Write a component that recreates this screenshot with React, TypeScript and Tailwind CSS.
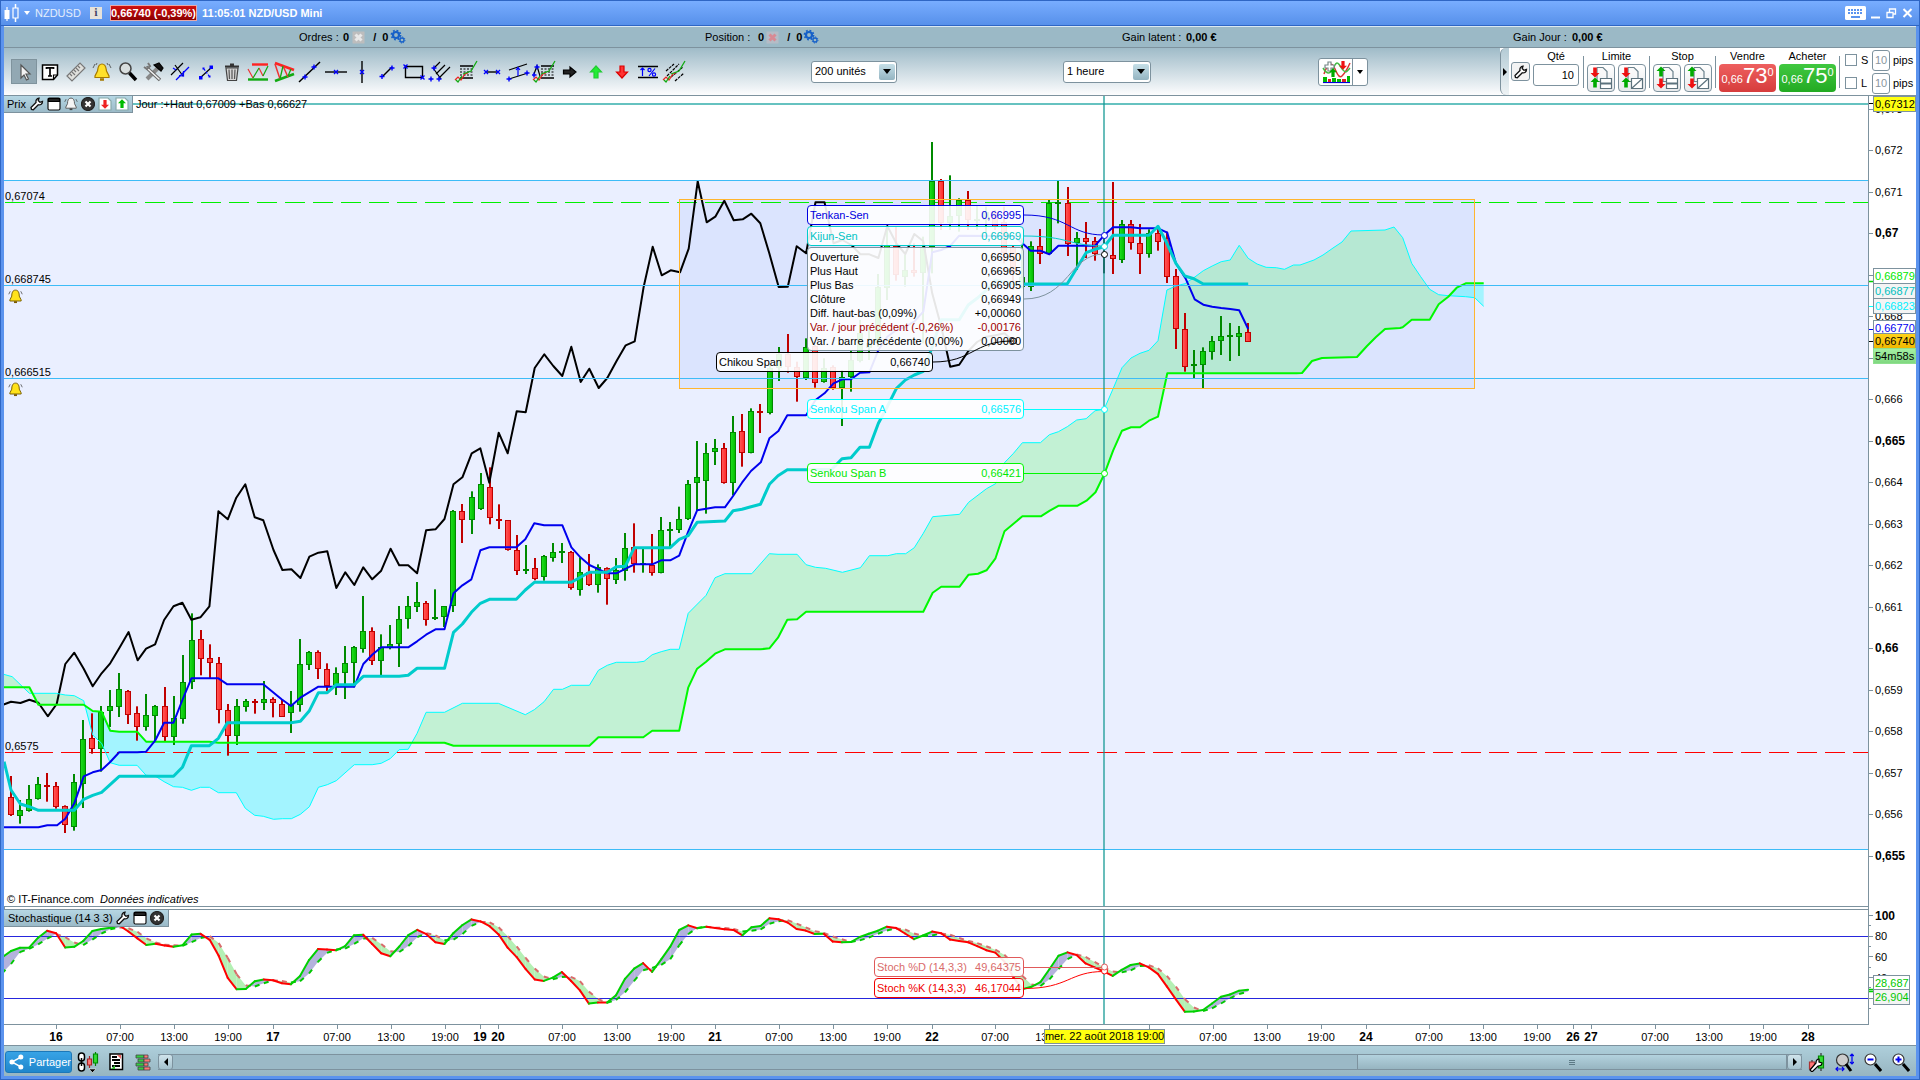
import React from "react";

type Pt = [number, number];

/* ---------- geometry ---------- */
const STEP = 9.03;
const FIRST = 11;
const barX = (i: number) => FIRST + i * STEP;

const trace = (ox: number, oy: number, flat: number[], kx = 2.45): Pt[] => {
  const out: Pt[] = [];
  for (let i = 0; i < flat.length; i += 2) out.push([ox + flat[i] / kx, oy + flat[i + 1] / 3]);
  return out;
};
const pts = (p: Pt[]) => p.map(([x, y]) => `${x.toFixed(1)},${y.toFixed(1)}`).join(" ");

/* ---------- candles: high, body top, body bottom, low, up(1)/down(0) ---------- */
const EARLY: number[][] = [
  [978, 1042, 1094, 1098, 0], [1050, 1080, 1097, 1121, 1], [1005, 1048, 1082, 1085, 1], [981, 1003, 1046, 1049, 1],
  [969, 1005, 1010, 1055, 0], [996, 1009, 1070, 1076, 0], [1066, 1069, 1126, 1149, 0], [972, 997, 1130, 1142, 1],
  [810, 868, 1001, 1074, 1], [790, 865, 896, 911, 0], [768, 785, 896, 965, 1], [720, 768, 782, 831, 1],
  [669, 718, 770, 801, 1], [720, 723, 794, 822, 0], [769, 790, 830, 872, 0], [732, 796, 830, 842, 1],
  [765, 768, 797, 870, 1], [711, 768, 860, 873, 0], [738, 805, 860, 885, 1], [615, 697, 806, 821, 1],
  [490, 571, 697, 717, 1], [540, 568, 626, 676, 0], [583, 625, 640, 685, 0], [621, 640, 781, 820, 0],
  [762, 781, 857, 917, 0], [747, 768, 857, 885, 1], [747, 753, 772, 785, 1], [747, 753, 760, 791, 0],
  [693, 747, 760, 780, 1], [742, 747, 760, 802, 0], [748, 762, 800, 800, 0], [723, 765, 790, 849, 1],
  [567, 643, 764, 785, 1], [603, 607, 646, 660, 1], [601, 607, 656, 687, 0], [640, 657, 708, 723, 0],
  [652, 670, 706, 735, 1], [588, 640, 668, 747, 1], [588, 592, 640, 712, 1], [438, 544, 596, 608, 1],
  [532, 544, 632, 645, 0], [553, 592, 632, 676, 1], [525, 583, 595, 598, 1], [468, 508, 583, 651, 1],
  [438, 469, 506, 536, 1], [396, 457, 470, 486, 1], [453, 460, 509, 527, 0], [418, 502, 507, 510, 1],
  [468, 469, 500, 531, 1], [180, 184, 469, 486, 1], [162, 184, 209, 279, 0], [124, 142, 209, 252, 1],
  [69, 103, 178, 180, 1], [52, 112, 203, 223, 0], [163, 208, 213, 237, 0], [211, 211, 301, 302, 0],
  [255, 301, 362, 375, 0], [285, 358, 362, 372, 1], [324, 355, 386, 391, 0], [315, 319, 382, 392, 1],
  [279, 307, 323, 335, 1], [279, 304, 310, 339, 1], [303, 307, 415, 419, 0], [322, 367, 419, 437, 1],
  [312, 367, 406, 408, 0], [343, 352, 404, 428, 1], [352, 355, 388, 464, 0], [324, 360, 389, 402, 1],
  [249, 295, 362, 392, 1], [220, 292, 343, 368, 0], [295, 340, 344, 368, 1], [252, 345, 370, 377, 0],
  [201, 241, 370, 370, 1], [216, 237, 242, 292, 1], [170, 208, 239, 249, 1], [90, 103, 206, 210, 1],
];
const LATE: number[][] = [
  [933, 1042, 1060, 1140, 1], [939, 969, 1054, 1151, 1], [927, 955, 967, 1005, 1], [939, 955, 1060, 1061, 0],
  [858, 907, 1060, 1096, 1], [852, 904, 970, 1010, 0], [835, 844, 968, 970, 1], [822, 844, 848, 909, 0],
  [700, 715, 848, 853, 1], [651, 672, 715, 753, 1], [612, 672, 710, 728, 0], [695, 710, 740, 815, 0],
  [625, 650, 743, 750, 1], [645, 648, 758, 773, 0], [685, 714, 755, 758, 1], [706, 712, 775, 779, 0],
  [720, 742, 773, 888, 1], [660, 690, 742, 785, 1], [570, 610, 692, 697, 1], [590, 640, 655, 690, 1],
  [432, 472, 640, 650, 1], [290, 345, 474, 510, 1], [290, 348, 436, 452, 0], [375, 420, 440, 470, 1],
  [340, 420, 430, 440, 0], [320, 350, 428, 640, 1], [36, 154, 350, 430, 1], [147, 153, 278, 300, 0],
  [136, 258, 278, 300, 1], [205, 210, 258, 305, 1], [183, 210, 270, 300, 0], [225, 268, 274, 300, 1],
  [230, 245, 270, 310, 1], [240, 245, 290, 300, 0], [230, 275, 370, 400, 0], [345, 350, 430, 480, 0],
  [325, 440, 472, 475, 1], [334, 348, 472, 483, 1], [297, 348, 371, 402, 0], [210, 219, 372, 375, 1],
  [152, 216, 221, 280, 1], [171, 219, 341, 378, 0], [306, 324, 340, 420, 1], [276, 324, 335, 384, 0],
  [321, 334, 373, 392, 0], [320, 372, 376, 430, 2], [156, 376, 387, 432, 0], [270, 283, 389, 399, 1],
  [270, 283, 338, 359, 0], [282, 339, 373, 432, 0], [298, 310, 373, 383, 1], [298, 310, 335, 362, 0],
  [305, 325, 440, 459, 0], [417, 439, 596, 657, 0], [549, 598, 710, 725, 0], [660, 702, 706, 744, 1],
  [652, 664, 704, 775, 1], [618, 634, 665, 689, 1], [558, 619, 634, 675, 1], [579, 616, 620, 693, 1],
  [588, 610, 620, 678, 1], [579, 607, 635, 636, 0],
];
const CANDLES = [
  ...EARLY.map((c) => [450 + c[0] / 3, 450 + c[1] / 3, 450 + c[2] / 3, 450 + c[3] / 3, c[4]]),
  ...LATE.map((c) => [130 + c[0] / 3, 130 + c[1] / 3, 130 + c[2] / 3, 130 + c[3] / 3, c[4]]),
];

/* ---------- Ichimoku lines ---------- */
const CHIKOU: Pt[] = [
  ...trace(0, 450, [0, 768, 27, 755, 50, 759, 72, 749, 94, 758, 117, 799, 139, 762, 160, 642, 182, 608, 205, 656, 227, 709, 249, 670, 270, 640, 292, 595, 315, 546, 337, 631, 358, 596, 380, 583, 402, 510, 425, 469, 447, 458, 469, 509, 491, 502, 513, 469, 535, 184, 558, 208, 579, 143, 601, 103, 624, 202, 645, 211, 670, 300, 692, 360, 714, 358, 736, 384, 758, 320, 780, 308, 802, 304, 824, 414, 846, 367, 868, 405, 890, 352, 912, 388, 934, 362, 957, 296, 978, 346, 1000, 346, 1022, 370, 1044, 241, 1067, 238, 1089, 207, 1111, 103, 1133, 82]),
  ...trace(390, 50, [245, 1210, 271, 1195, 298, 1298, 326, 1148, 353, 1210, 380, 1084, 407, 1087, 434, 954, 463, 913, 490, 948, 517, 978, 544, 890, 572, 996, 598, 956, 626, 1014, 652, 984, 680, 932, 707, 886, 734, 874, 761, 710, 788, 590, 815, 676, 842, 661, 870, 667, 896, 596, 923, 394, 950, 517, 976, 500, 1003, 452, 1031, 511, 1058, 508, 1084, 491, 1111, 520, 1138, 610, 1166, 711], 3),
  ...trace(660, 130, [313, 470, 335, 349, 358, 370, 381, 217, 403, 217, 425, 340, 447, 330, 469, 345, 491, 373, 513, 373, 535, 384, 557, 288, 579, 340, 601, 372, 623, 312, 645, 334, 667, 490, 689, 590, 711, 710, 733, 704, 755, 664, 777, 636, 800, 620, 822, 616, 844, 610, 866, 634]),
];
const TENKAN: Pt[] = [
  ...trace(0, 450, [0, 1132, 94, 1132, 116, 1126, 140, 1126, 160, 1106, 182, 1060, 205, 979, 227, 967, 249, 960, 270, 936, 292, 907, 336, 907, 358, 905, 380, 872, 402, 818, 425, 818, 447, 750, 469, 685, 535, 685, 557, 703, 645, 703, 690, 748, 713, 768, 736, 743, 780, 710, 868, 710, 890, 642, 912, 614, 934, 592, 1000, 592, 1022, 574, 1044, 554, 1067, 538, 1089, 538, 1111, 430, 1133, 406, 1155, 388, 1177, 301, 1199, 292, 1265, 292, 1287, 268, 1309, 220, 1333, 226, 1378, 226, 1400, 292, 1422, 322, 1444, 345, 1488, 370, 1510, 370, 1554, 343]),
  ...trace(640, 450, [0, 343, 30, 343, 52, 331, 74, 331, 96, 317, 118, 245, 140, 181, 162, 176, 184, 172, 208, 172, 228, 138, 250, 98, 272, 63]),
  ...trace(660, 130, [247, 997, 268, 925, 290, 903, 312, 856, 358, 856, 381, 810, 403, 790, 425, 760, 447, 748, 468, 748, 490, 728, 513, 727, 535, 660, 557, 620, 579, 600, 601, 590, 623, 575, 645, 545, 667, 367, 689, 360, 711, 348, 733, 317, 844, 318, 866, 318, 888, 340, 908, 362, 932, 362, 954, 373, 976, 347, 1066, 347, 1088, 316, 1110, 292, 1154, 292, 1176, 295, 1220, 295, 1243, 308, 1264, 400, 1288, 446, 1310, 508, 1331, 524, 1353, 530, 1375, 534, 1397, 537, 1419, 541, 1441, 597]),
];
const KIJUN: Pt[] = [
  ...trace(0, 450, [10, 935, 27, 1020, 50, 1062, 72, 1070, 94, 1081, 182, 1081, 205, 1048, 227, 1036, 249, 1027, 292, 979, 425, 979, 447, 952, 469, 887, 513, 887, 535, 865, 557, 818, 713, 818, 736, 814, 758, 782, 780, 728, 802, 728, 824, 704, 868, 704, 890, 679, 978, 679, 1000, 676, 1022, 655, 1089, 655, 1111, 547, 1133, 522, 1155, 487, 1177, 460, 1199, 448, 1265, 448, 1287, 420, 1309, 397, 1400, 397, 1444, 367, 1488, 367, 1510, 350, 1532, 349, 1554, 293]),
  ...trace(640, 450, [0, 293, 74, 293, 96, 268, 118, 257, 140, 217, 208, 213, 228, 182, 250, 178, 272, 170, 295, 163, 317, 103, 338, 77, 361, 59, 410, 59, 470, 58, 495, 26]),
  ...trace(660, 130, [468, 983, 490, 952, 513, 952, 535, 880, 557, 830, 579, 776, 601, 750, 623, 735, 645, 724, 667, 650, 689, 569, 733, 569, 755, 525, 777, 505, 800, 480, 822, 450, 866, 462, 998, 461, 1021, 415, 1044, 368, 1066, 358, 1088, 350, 1110, 316, 1198, 316, 1220, 289, 1242, 340, 1264, 400, 1286, 438, 1308, 446, 1331, 462, 1441, 462]),
];
const SPAN_A: Pt[] = [
  ...trace(0, 450, [0, 670, 30, 680, 72, 730, 138, 730, 160, 735, 182, 737, 205, 752, 227, 855, 249, 880, 270, 938, 292, 946, 336, 946, 358, 976, 380, 978, 402, 995, 425, 1010, 447, 1012, 469, 1021, 491, 1012, 513, 1012, 535, 1028, 579, 1028, 601, 1075, 624, 1096, 645, 1099, 670, 1108, 692, 1106, 714, 1106, 736, 1093, 758, 1070, 780, 1012, 802, 1004, 824, 992, 868, 944, 912, 944, 934, 940, 956, 926, 978, 899, 1000, 898, 1022, 850, 1044, 787, 1089, 787, 1133, 760, 1221, 760, 1287, 794, 1309, 779, 1333, 755, 1356, 718, 1378, 718, 1400, 706, 1444, 706, 1466, 661, 1488, 646, 1510, 637, 1560, 637]),
  ...trace(640, 450, [10, 634, 30, 614, 52, 605, 74, 598, 96, 598, 118, 490, 162, 436, 184, 383, 208, 371, 274, 371, 317, 311, 338, 313, 385, 313, 407, 344, 430, 352, 455, 355, 496, 367, 540, 353, 562, 317, 607, 317, 628, 311, 651, 311, 672, 293, 694, 250, 717, 200, 783, 193, 805, 157, 849, 116, 871, 101]),
  ...trace(660, 130, [844, 998, 866, 970, 888, 938, 932, 938, 954, 914, 976, 905, 998, 890, 1021, 870, 1044, 866, 1066, 842, 1088, 838, 1110, 776, 1132, 713, 1154, 684, 1176, 670, 1198, 661, 1220, 632, 1242, 480, 1264, 468, 1286, 461, 1308, 443, 1331, 422, 1353, 408, 1375, 395, 1397, 390, 1419, 346, 1441, 385, 1463, 402, 1485, 412, 1510, 413, 1530, 418, 1552, 405]),
  [1300, 265], [1314, 260], [1323, 255], [1333, 248], [1342, 242], [1351, 231], [1385, 230], [1394, 227],
  ...trace(1400, 90, [8, 443, 35, 520, 62, 560, 89, 598, 116, 614, 145, 617, 197, 620, 224, 623, 251, 649], 3),
];
const SPAN_B: Pt[] = [
  ...trace(0, 450, [0, 712, 72, 712, 94, 764, 205, 764, 227, 783, 249, 785, 270, 842, 292, 845, 336, 845, 358, 875, 513, 875, 535, 878, 1089, 878, 1111, 887, 1444, 887, 1466, 862, 1568, 862]),
  ...trace(640, 450, [8, 862, 30, 842, 96, 842, 118, 713, 140, 656, 162, 635, 184, 611, 208, 598, 295, 598, 317, 595, 338, 563, 361, 509, 385, 508, 407, 485, 694, 485, 717, 428, 738, 410, 783, 410, 805, 374, 828, 371, 849, 361, 871, 325, 893, 244, 937, 199, 982, 199, 1004, 182, 1026, 167, 1072, 167, 1094, 152, 1116, 127, 1138, 71]),
  ...trace(660, 130, [1110, 962, 1132, 902, 1154, 892, 1176, 892, 1198, 872, 1220, 860, 1243, 730, 1560, 730]),
  [1302, 373], [1312, 361], [1322, 358], [1357, 357], [1367, 346], [1376, 337], [1385, 329], [1400, 328],
  ...trace(1400, 90, [8, 712, 35, 689, 89, 689, 116, 643, 145, 620, 170, 593, 197, 580, 251, 580], 3),
];
const CLOUD = pts([...SPAN_A, ...[...SPAN_B].reverse()]);

/* ---------- stochastic ---------- */
const K_RAW: Pt[] = [
  ...trace(0, 890, [-10, 215, 12, 196, 27, 183, 50, 173, 72, 173, 94, 142, 116, 122, 138, 130, 161, 175, 183, 170, 205, 152, 227, 122, 249, 117, 271, 113, 292, 106, 315, 125, 358, 165, 380, 161, 402, 166, 425, 170, 447, 166, 469, 134, 491, 131, 513, 148, 535, 195, 557, 262, 579, 298, 601, 298, 623, 274, 645, 268, 669, 271, 692, 280, 713, 283, 736, 257, 758, 208, 780, 176, 824, 181, 846, 168, 868, 135, 890, 134, 934, 190, 956, 199, 978, 170, 1000, 136, 1022, 119, 1044, 132, 1067, 157, 1089, 162, 1111, 129, 1133, 105, 1155, 88, 1177, 94, 1199, 108, 1221, 132, 1243, 172, 1265, 200, 1287, 236, 1309, 268, 1333, 273, 1356, 262, 1378, 245, 1420, 300, 1444, 343, 1466, 337, 1490, 338, 1510, 315, 1532, 265, 1554, 235]),
  ...trace(640, 890, [8, 219, 30, 246, 52, 208, 74, 170, 96, 120, 118, 106, 140, 115, 162, 110, 208, 118, 228, 119, 250, 137, 272, 112, 295, 108, 317, 85, 340, 88, 361, 97, 385, 118, 407, 122, 430, 133, 452, 131, 474, 157, 515, 157, 540, 140, 583, 122, 607, 109, 628, 114, 672, 148, 717, 124, 738, 130, 760, 149, 805, 157, 849, 181, 871, 188, 893, 215, 915, 262, 937, 298, 960, 290, 980, 278, 1004, 236, 1026, 196, 1048, 187, 1072, 196, 1094, 223, 1116, 233, 1138, 245, 1160, 259, 1182, 238, 1204, 224, 1226, 220, 1248, 233, 1270, 253, 1314, 330, 1336, 367, 1360, 364, 1380, 360, 1402, 340, 1425, 319, 1447, 313, 1468, 302, 1492, 299]),
];
const sample = (x: number) => {
  for (let i = 1; i < K_RAW.length; i++) {
    const [x0, y0] = K_RAW[i - 1];
    const [x1, y1] = K_RAW[i];
    if (x <= x1) return y0 + ((y1 - y0) * (x - x0)) / (x1 - x0 || 1);
  }
  return K_RAW[K_RAW.length - 1][1];
};
const K: Pt[] = Array.from({ length: 139 }, (_, n): Pt => [barX(n - 1), sample(barX(n - 1))]);
const D: Pt[] = K.map(([x, y], i): Pt => {
  if (i < 2) return [x, y + 16 - i * 3];
  return [x, (K[i][1] + K[i - 1][1] + K[i - 2][1]) / 3];
});

/* ---------- axes ---------- */
const TIMES: [number, string][] = [
  [56, "16"], [120, "07:00"], [174, "13:00"], [228, "19:00"], [273, "17"], [337, "07:00"], [391, "13:00"], [445, "19:00"],
  [480, "19"], [498, "20"], [562, "07:00"], [617, "13:00"], [671, "19:00"], [715, "21"], [779, "07:00"], [833, "13:00"],
  [887, "19:00"], [932, "22"], [995, "07:00"], [1049, "13:00"], [1149, ""], [1213, "07:00"], [1267, "13:00"],
  [1321, "19:00"], [1366, "24"], [1429, "07:00"], [1483, "13:00"], [1537, "19:00"], [1573, "26"], [1591, "27"],
  [1655, "07:00"], [1709, "13:00"], [1763, "19:00"], [1808, "28"],
];
const PRICES = ["0,673", "0,672", "0,671", "0,67", "0,669", "0,668", "0,667", "0,666", "0,665", "0,664", "0,663", "0,662", "0,661", "0,66", "0,659", "0,658", "0,657", "0,656", "0,655"];
const MAJOR = ["0,67", "0,665", "0,66", "0,655"];

/* ---------- icons ---------- */
const Svg = ({ w = 24, h = 24, children }: { w?: number; h?: number; children: React.ReactNode }) => (
  <svg width={w} height={h} viewBox={`0 0 ${w} ${h}`} fill="none" stroke="#000" strokeWidth="1.2" aria-hidden="true" className="shrink-0">
    {children}
  </svg>
);
const X = ({ x, y }: { x: number; y: number }) => <path d={`M${x - 2} ${y - 2}l4 4m0-4l-4 4`} stroke="#00f" strokeWidth="1.3" />;
const P = ({ x, y }: { x: number; y: number }) => <path d={`M${x - 2.5} ${y}h5M${x} ${y - 2.5}v5`} stroke="#00f" strokeWidth="1.4" />;
const Wrench = () => (
  <Svg w={14} h={14}>
    <path d="M1.5 12.5l-.5-2 5-5c-.5-2 .8-4 3-4.300l-.8 2.300 1.800 1.800L12.500 4.500c0 2.500-2 3.800-4.200 3.300l-5 5z" fill="#fff" stroke="#111" strokeWidth="1.3" />
  </Svg>
);
const WindowIco = () => (
  <Svg w={14} h={14}><rect x="1" y="1" width="12" height="12" rx="1.500" fill="#fff" stroke="#111" /><path d="M1.500 1.500h11v3h-11z" fill="#222" /></Svg>
);
const CloseIco = () => (
  <Svg w={14} h={14}><circle cx="7" cy="7" r="6.500" fill="#333" stroke="#222" /><path d="M4.500 4.500l5 5m0-5l-5 5" stroke="#fff" strokeWidth="2.200" /></Svg>
);
const Bell = ({ gold = false, s = 14 }: { gold?: boolean; s?: number }) => (
  <svg width={s} height={s} viewBox="0 0 20 20" aria-hidden="true" className="shrink-0">
    <path d="M10 1.500c-4 0-5 4-5 8l-2.500 5v1.500h15v-1.500l-2.500-5c0-4-1-8-5-8z" fill={gold ? "#ffe21a" : "#f4f4f4"} stroke={gold ? "#7a6000" : "#555"} strokeWidth="1.300" />
    <path d="M8 17.500h4" stroke={gold ? "#7a5a00" : "#444"} strokeWidth="2.500" />
    <path d="M3 3L1 7M17 3l2 4" stroke="#444" strokeWidth="1" />
  </svg>
);
const Arrow = ({ x, y, up, c, s = 1 }: { x: number; y: number; up?: boolean; c: string; s?: number }) => (
  <path d={up ? "M0-6l5 5h-3v6h-4v-6h-3z" : "M0 6l5-5h-3v-6h-4v6h-3z"} transform={`translate(${x} ${y}) scale(${s})`} fill={c} stroke="none" />
);
const PageArrow = ({ up }: { up?: boolean }) => (
  <Svg w={14} h={14}><path d="M1 1h9l3 3v9h-12z" fill="#fff" stroke="#8aa" /><Arrow x={7} y={7} up={up} c={up ? "#0b0" : "#e22"} s={0.8} /></Svg>
);
const Gears = () => (
  <Svg w={17} h={16}>
    <circle cx="6" cy="6" r="3" stroke="#1660c8" strokeWidth="2.200" />
    <circle cx="6" cy="6" r="4.600" stroke="#1660c8" strokeWidth="1.600" strokeDasharray="1.800 1.800" />
    <circle cx="12" cy="11" r="2" stroke="#1660c8" strokeWidth="1.300" />
    <circle cx="12" cy="11" r="3" stroke="#1660c8" strokeWidth="1" strokeDasharray="1.300 1" />
  </Svg>
);
const CancelPage = ({ c, bg }: { c: string; bg: string }) => (
  <Svg w={13} h={13}><rect x=".5" y=".5" width="12" height="12" fill={bg} stroke="none" /><path d="M3.500 3.500l6 6m0-6l-6 6" stroke={c} strokeWidth="3" /></Svg>
);
const wave = (
  <>
    <path d="M1 20l3-3 3 3 4-6 3-1" stroke="#e22" />
    <path d="M2 20l2 2 4-6M9 14l8-3 6-10" stroke="#1a1" strokeWidth="1.300" />
  </>
);

const TOOLS: [string, React.ReactNode][] = [
  ["Curseur", <path d="M9 5v13l3-3 2.500 5 2-1-2.500-5h4z" fill="#f2f2f2" stroke="#555" />],
  ["Texte", <><path d="M4.500 5h15v10l-4 4.500h-11z" fill="#fff" strokeWidth="1.500" /><path d="M19.500 15h-4v4.500" /><path d="M8.500 9V7.800h7V9M12 8v8M10 16h4" strokeWidth="1.700" /></>],
  ["Règle", <><path d="M3 16L16 3l5 5L8 21z" fill="#e0e0dc" stroke="#777" /><path d="M6 14l2 2m0-4l3 3m-1-5l2 2m0-4l3 3m-1-5l2 2" stroke="#777" /></>],
  ["Alerte", <><path d="M12 4c-4 0-4 4-4.500 7L5 16v1.500h14V16l-2.500-5C16 8 16 4 12 4z" fill="#ffe02a" stroke="#a67a00" /><path d="M10 19.500h4" stroke="#a67a00" strokeWidth="2.500" /><path d="M5 4L3 8M19 4l2 4M7 3l-1 2M17 3l1 2" stroke="#444" strokeWidth=".8" /></>],
  ["Loupe", <><circle cx="9.500" cy="8.500" r="5.500" fill="#d8dede" stroke="#444" strokeWidth="1.500" /><path d="M13.500 13l6.500 7" strokeWidth="3.500" /></>],
  ["Outils", <><path d="M5 19L16 8" stroke="#888" strokeWidth="4" /><path d="M4 7l14 13" stroke="#666" strokeWidth="3.500" /><path d="M4.500 7.500l13 12" stroke="#f2f2f2" strokeWidth="1.500" /><path d="M12 5l5-2 4 5-2 3z" fill="#111" /><path d="M2 7l3 2 3-3-2-3" stroke="#777" strokeWidth="2" /></>],
  ["Parallèles", <><path d="M3 15L15 3M7 5l8 11" /><path d="M8 20L21 7" stroke="#00f" strokeWidth="1.300" /><path d="M11 15.500l4.500.5V11" stroke="#00f" /><path d="M5 8l3 2" stroke="#00f" /></>],
  ["Segment croisé", <><path d="M6 18L18 7" /><path d="M5 16h3.500v3.500H5zM15.500 5.500H19V9h-3.500z" fill="#00f" stroke="none" /><path d="M10 9l5 7" stroke="#00f" strokeDasharray="2 1.500" /><path d="M8.500 7.500h2v2h-2zM14.500 15.500h2v2h-2z" fill="#00f" stroke="none" /></>],
  ["Corbeille", <><path d="M6 8h12l-1.500 12.500h-9z" fill="#d5d5d5" stroke="#444" /><path d="M5 6.500h14M10 4.500h4" stroke="#333" strokeWidth="2" /><path d="M9 9.500l.5 9.500M12 9.500V19M15 9.500l-.5 9.500" stroke="#555" /></>],
  ["Canal horizontal", <><path d="M6 4.500h16" stroke="#f22" strokeWidth="2.400" /><path d="M2 19.500h20" stroke="#1a1" strokeWidth="2.400" /><path d="M2 9l5 9M13 8l4 8" stroke="#e33" /><path d="M7 18l6-10M17 16l5-10" stroke="#1a1" /></>],
  ["Triangle", <><path d="M3 3l19 7" stroke="#f22" strokeWidth="2.600" /><path d="M3 21l19-7" stroke="#1a1" strokeWidth="2.600" /><path d="M3 4l5 15M11 6l5 11" stroke="#e33" strokeWidth="1.500" /><path d="M8 19l3-13M16 16l3-7" stroke="#1a1" strokeWidth="1.300" /></>],
  ["Droite", <><path d="M1 22L22 2" strokeWidth="1.500" /><P x={7} y={17} /><P x={16} y={7} /></>],
  ["Horizontale", <><path d="M1 12h22" strokeWidth="1.400" /><X x={12} y={12} /></>],
  ["Verticale", <><path d="M12 1v22" strokeWidth="1.400" /><X x={12} y={12} /></>],
  ["Segment", <><path d="M7 16l9-9" strokeWidth="1.500" /><P x={6} y={16.500} /><P x={16} y={8} /></>],
  ["Rectangle", <><path d="M3.500 6.500h17v11h-17z" strokeWidth="1.400" /><X x={3.500} y={6.500} /><X x={20.500} y={17.500} /></>],
  ["Fourche", <><path d="M5 8l8 11M6 8l6-6M8 14l9-9M11 18l11-11" /><P x={6} y={8} /><P x={3} y={19} /><P x={11} y={19} /></>],
  ["Fibonacci", <><path d="M6 6h13M6 18h13" strokeWidth="1.500" /><path d="M6 9h13M6 12h13M6 15h13" strokeDasharray="2 1.500" />{wave}</>],
  ["Mesure", <><path d="M6 12h12" strokeWidth="1.400" /><X x={6} y={12} /><X x={18} y={12} /></>],
  ["Canal", <><path d="M3 10l18-6M3 19l19-6" /><path d="M12 8v8M10 10l2-2.500 2 2.500" stroke="#00f" /><P x={3} y={19} /><P x={21} y={13} /></>],
  ["Extension", <><path d="M9 6h13M9 18h13" strokeWidth="1.500" /><path d="M9 9h13M9 12h13M9 15h13" strokeDasharray="2 1.500" />{wave}<path d="M2 14l3-8 3 10" /><P x={5} y={7} /><P x={2} y={15} /></>],
  ["Flèche droite", <path d="M5.500 10h6.500V7l6 5-6 5v-3H5.500z" fill="#222" />],
  ["Flèche haut", <path d="M12 6l5.500 6H14v6h-4v-6H6.500z" fill="#2e3" stroke="#2c3" />],
  ["Flèche bas", <path d="M12 18l5.500-6H14V6h-4v6H6.500z" fill="#f33" stroke="#d00" />],
  ["Pourcentage", <><path d="M2 6.500h20M2 17.500h20" strokeWidth="1.400" /><path d="M6.500 8v8M4.500 10l2-2 2 2" stroke="#00f" /><path d="M19 8.500l-6 7.500" stroke="#00f" /><circle cx="13.500" cy="10" r="1.600" stroke="#00f" /><circle cx="18" cy="14.500" r="1.600" stroke="#00f" /></>],
  ["Éventail", <><path d="M4 11l8-7M5 16L17 4M9 17L21 7M13 21l9-8" strokeDasharray="3 1" />{wave}</>],
];

const Sep = () => <span className="mx-px h-8 w-px self-center bg-[#7d929e]" />;
const iconBtn = "flex h-7 w-7 items-center justify-center rounded-sm border border-[#7d929e] bg-linear-to-b from-white to-[#e8eaec]";
const OrderIco = ({ limit, slash }: { limit?: boolean; slash?: boolean }) => (
  <Svg w={26} h={26}>
    <path d="M9 2.500h6l4 4v7M9 2.500v14h3" stroke="#6c828d" fill="#f8f8f8" />
    <path d="M12.500 13.500h11v10h-11z" fill="#fff" stroke="#5c727d" />
    {slash ? <path d="M12.500 23.500l11-10" stroke="#5c727d" /> : <path d="M13 18.500h10" stroke="#5c727d" strokeWidth="2" />}
    <Arrow x={7} y={7} up={!limit} c={limit ? "#e11" : "#0a0"} s={0.9} />
    <Arrow x={7} y={18} up={limit} c={limit ? "#0a0" : "#e11"} s={0.9} />
  </Svg>
);

const Price = ({ name, tail, cls, label }: { name: string; tail: string; cls: string; label: string }) => (
  <div className="flex flex-col items-center">
    <span className="h-4 leading-4">{label}</span>
    <button aria-label={name} className={`flex h-7 w-[57px] items-baseline justify-center rounded-sm text-white ${cls}`}>
      <span className="text-[11px] leading-7">0,66</span>
      <span className="text-[22px] leading-6">{tail}</span>
      <span className="self-start text-[11px] leading-4">0</span>
    </button>
  </div>
);

const Tag = ({ y, t, cls }: { y: string; t: string; cls: string }) => (
  <span className={`absolute left-1 flex h-4 items-center border pl-px text-[11px] ${y} ${cls}`}>{t}</span>
);
const Info = ({ pos, name, val, cls }: { pos: string; name: string; val: string; cls: string }) => (
  <div className={`absolute flex h-5 items-center justify-between rounded-[4px] border bg-white/90 px-[2px] ${pos} ${cls}`}>
    <span>{name}</span>
    <span>{val}</span>
  </div>
);

const OHLC: [string, string, string][] = [
  ["Ouverture", "0,66950", ""], ["Plus Haut", "0,66965", ""], ["Plus Bas", "0,66905", ""], ["Clôture", "0,66949", ""],
  ["Diff. haut-bas (0,09%)", "+0,00060", ""], ["Var. / jour précédent (-0,26%)", "-0,00176", "text-[#a00000]"],
  ["Var. / barre précédente (0,00%)", "0,00000", ""],
];
const LEVELS: [string, string, boolean][] = [
  ["top-[94px]", "0,67074", false], ["top-[177px]", "0,668745", true], ["top-[270px]", "0,666515", true], ["top-[644px]", "0,6575", false],
];

const Select = ({ label, value, cls }: { label: string; value: string; cls: string }) => (
  <div className={`relative h-[22px] ${cls}`}>
    <select aria-label={label} className="h-full w-full appearance-none rounded-[3px] border border-[#7d929e] bg-white pl-[3px] text-[11px]">
      <option>{value}</option>
    </select>
    <span className="pointer-events-none absolute top-[3px] right-[2px] flex h-4 w-4 items-center justify-center rounded-[2px] bg-linear-to-b from-[#c5dfe8] to-[#94b4c1]">
      <span className="border-x-4 border-t-[5px] border-x-transparent border-t-black" />
    </span>
  </div>
);

function PriceChart() {
  return (
    <section className="relative min-h-0 flex-1 overflow-hidden border-b border-[#7d929e] bg-white">
      <svg className="absolute inset-0 h-full w-full" aria-label="Cours NZD/USD">
        <defs>
          <clipPath id="bull"><rect x="0" y="0" width="84" height="1000" /><rect x="412" y="0" width="1036" height="1000" /></clipPath>
          <clipPath id="bear"><rect x="84" y="0" width="328" height="1000" /><rect x="1448" y="0" width="60" height="1000" /></clipPath>
          <linearGradient id="up"><stop offset="0" stopColor="#1fe01f" /><stop offset="1" stopColor="#0b0" /></linearGradient>
          <linearGradient id="down"><stop offset="0" stopColor="#ff5a5a" /><stop offset="1" stopColor="#ff2828" /></linearGradient>
        </defs>
        <g transform="translate(-4 -96)">
          <rect x="0" y="180" width="4000" height="669" fill="#eaefff" />
          <rect x="679.5" y="199.5" width="795" height="189" fill="#dbe4fe" />
          <polygon points={CLOUD} fill="#00ff00" fillOpacity=".17" clipPath="url(#bull)" />
          <polygon points={CLOUD} fill="#00ffff" fillOpacity=".3" clipPath="url(#bear)" />
          <path d="M5 202.500H4000" stroke="#00f000" strokeDasharray="20 8" />
          <path d="M5 752.500H4000" stroke="#f00" strokeDasharray="20 8" />
          {CANDLES.map(([h, t, b, l, up], i) => {
            const x = Math.round(barX(i));
            const edge = up === 2 ? "#333" : up ? "#008a00" : "#c00000";
            const top = Math.round(t);
            return (
              <g key={i}>
                <rect x={x - 1} y={h} width="2" height={l - h} fill={edge} />
                <rect x={x - 2.5} y={top + 0.5} width="5" height={Math.max(1, Math.round(b) - top - 1)} fill={up === 1 ? "url(#up)" : up ? "#fff" : "url(#down)"} stroke={edge} />
              </g>
            );
          })}
          <g fill="none" strokeLinejoin="round">
            <polyline points={pts(CHIKOU)} stroke="#000" strokeWidth="2" />
            <polyline points={pts(SPAN_A)} stroke="#00ffff" />
            <polyline points={pts(SPAN_B)} stroke="#00f800" strokeWidth="2" />
            <polyline points={pts(TENKAN)} stroke="#0000ee" strokeWidth="2" />
            <polyline points={pts(KIJUN)} stroke="#00cccc" strokeWidth="3" />
          </g>
          <path d="M0 180.500H4000M0 285.500H4000M0 378.500H4000M0 849.500H4000" stroke="#3dbcf7" />
          <rect x="679.5" y="199.5" width="795" height="189" fill="none" stroke="#ffb52e" />
          <path d="M131 104H4000" stroke="#66c2c0" strokeWidth="2" />
          <path d="M1104 96V1000" stroke="#0c9490" strokeOpacity=".62" strokeWidth="2" />
        </g>
      </svg>

      <div className="absolute top-0 left-0 flex h-[17px] items-center gap-[3px] border-r border-b border-[#7d929e] bg-linear-to-b from-[#b6d7e4] to-[#9bbac8] pr-[3px] pl-[3px]">
        <span className="pr-px">Prix</span>
        <button aria-label="Paramètres"><Wrench /></button>
        <button aria-label="Fenêtre"><WindowIco /></button>
        <button aria-label="Alerte"><Bell /></button>
        <button aria-label="Fermer"><CloseIco /></button>
        <button aria-label="Descendre"><PageArrow /></button>
        <button aria-label="Monter"><PageArrow up /></button>
      </div>
      <span className="absolute top-0 left-[132px] leading-4">Jour :+Haut 0,67009 +Bas 0,66627</span>
      {LEVELS.map(([y, t, bell]) => (
        <div key={t} className={`absolute left-px leading-3 ${y}`}>
          {t}
          {bell && <div className="pt-1 pl-[3px]"><Bell gold s={15} /></div>}
        </div>
      ))}

      <Info pos="top-[109px] left-[803px] w-[217px]" name="Tenkan-Sen" val="0,66995" cls="border-[#0000e0] text-[#0000e0]" />
      <Info pos="top-[130px] left-[803px] w-[217px]" name="Kijun-Sen" val="0,66969" cls="border-[#00cccc] text-[#00c4c4]" />
      <dl className="absolute top-[151px] left-[803px] w-[217px] rounded-[4px] border border-[#7d929e] bg-white/90 px-[2px] py-[2px]">
        {OHLC.map(([n, v, c]) => (
          <div key={n} className={`flex justify-between leading-[14px] ${c}`}><dt>{n}</dt><dd>{v}</dd></div>
        ))}
      </dl>
      <Info pos="top-[256px] left-[712px] w-[217px]" name="Chikou Span" val="0,66740" cls="border-black" />
      <Info pos="top-[303px] left-[803px] w-[217px]" name="Senkou Span A" val="0,66576" cls="border-[#00ffff] text-[#00f0ff]" />
      <Info pos="top-[367px] left-[803px] w-[217px]" name="Senkou Span B" val="0,66421" cls="border-[#00f800] text-[#00e800]" />
      <svg className="pointer-events-none absolute inset-0 h-full w-full" aria-hidden="true">
        <g transform="translate(-4 -96)" fill="none">
          <path d="M1024 215c45 0 45 20 80 20" stroke="#0000e0" />
          <path d="M1024 236c45 0 45 10 80 10" stroke="#00cccc" />
          <path d="M1024 299c45 0 45-45 80-45" stroke="#7d929e" />
          <path d="M933 362c40 0 40-21 80-21" stroke="#000" />
          <path d="M1024 409.500h80" stroke="#00ffff" />
          <path d="M1024 473.500h80" stroke="#00f800" />
          <g fill="#fff">
            <circle cx="1104.500" cy="235.500" r="3" stroke="#0000e0" />
            <circle cx="1104.500" cy="246.500" r="3" stroke="#00cccc" />
            <circle cx="1104.500" cy="254.500" r="3" stroke="#000" />
            <circle cx="1104.500" cy="409.500" r="3" stroke="#00ffff" />
            <circle cx="1104.500" cy="473.500" r="3" stroke="#00f800" />
          </g>
          <circle cx="1013.500" cy="341" r="3" stroke="#000" />
        </g>
      </svg>
      <p className="absolute bottom-0 left-[3px] leading-[14px]">© IT-Finance.com&nbsp; <i>Données indicatives</i></p>
    </section>
  );
}

function StochChart() {
  return (
    <section className="relative h-[116px] shrink-0 overflow-hidden border-y border-[#7d929e] bg-white">
      <svg className="absolute inset-0 h-full w-full" aria-label="Stochastique">
        <g transform="translate(-4 -910)" fill="none">
          {K.slice(1).map(([x, y], n) => {
            const [px, py] = K[n];
            const above = y + py < D[n][1] + D[n + 1][1];
            return <polygon key={n} points={pts([[px, py], [x, y], D[n + 1], D[n]])} fill={above ? "#b4b2dd" : "#b4f0b4"} />;
          })}
          <path d="M0 936.500H4000M0 998.500H4000" stroke="#2626dd" />
          {D.slice(1).map((p, n) => (
            <polyline key={n} points={pts([D[n], p])} stroke={p[1] < D[n][1] ? "#00c800" : "#d96b6b"} strokeWidth="2" strokeDasharray="5 9" />
          ))}
          {K.slice(1).map((p, n) => (
            <polyline key={n} points={pts([K[n], p])} stroke={p[1] < K[n][1] ? "#00d000" : "#f00"} strokeWidth="2" strokeLinecap="round" />
          ))}
          <path d="M1104 900V1100" stroke="#0c9490" strokeOpacity=".62" strokeWidth="2" />
        </g>
      </svg>
      <div className="absolute top-0 left-0 flex h-[17px] items-center gap-[3px] border-r border-b border-[#7d929e] bg-linear-to-b from-[#b6d7e4] to-[#9bbac8] px-1">
        <span>Stochastique (14 3 3)</span>
        <button aria-label="Paramètres"><Wrench /></button>
        <button aria-label="Fenêtre"><WindowIco /></button>
        <button aria-label="Fermer"><CloseIco /></button>
      </div>
      <Info pos="top-[47px] left-[870px] w-[150px]" name="Stoch %D (14,3,3)" val="49,64375" cls="border-[#e05a5a] text-[#d96b6b]" />
      <Info pos="top-[68px] left-[870px] w-[150px]" name="Stoch %K (14,3,3)" val="46,17044" cls="border-[#f00000] text-[#f00000]" />
      <svg className="pointer-events-none absolute inset-0 h-full w-full" aria-hidden="true">
        <g transform="translate(-4 -910)" fill="none">
          <path d="M1024 967.500h80" stroke="#e05a5a" />
          <path d="M1024 988.500c45 0 45-17 80-17" stroke="#f00" />
          <circle cx="1104.500" cy="971" r="3" stroke="#f00" fill="#fff" />
          <circle cx="1104.500" cy="967" r="3" stroke="#e05a5a" fill="#fff" />
        </g>
      </svg>
    </section>
  );
}

export default function App() {
  return (
    <div className="flex h-screen min-w-[1500px] flex-col overflow-hidden border border-[#2f66c4] bg-[#5b93ee] pr-[3px] pb-[3px] pl-[3px] text-[11px] text-black [font-family:'Liberation_Sans',Arial,sans-serif]">
      <header className="-mx-[3px] flex h-[25px] shrink-0 items-center border-b border-[#2f66c4] bg-linear-to-b from-[#78adff] to-[#5790ea] pl-[2px] font-bold text-white">
        <Svg w={18} h={20}>
          <path d="M4 4v14" stroke="#fff" /><path d="M1.500 7h5v9h-5z" fill="#fff" stroke="none" />
          <path d="M12.500 1v4M12.500 15v4" stroke="#fff" strokeWidth="1.500" /><path d="M10 5h5v10h-5z" stroke="#fff" />
        </Svg>
        <span className="mr-[5px] ml-[3px] border-x-[3px] border-t-4 border-x-transparent border-t-white" />
        <span className="w-[55px] font-medium text-[#e4eefc]">NZDUSD</span>
        <button aria-label="Informations" className="mr-2 flex h-3 w-3 items-center justify-center bg-[#e6e2da] font-serif text-[11px] leading-3 text-[#446]">i</button>
        <span className="flex h-4 items-center border border-[#e8a8a8] bg-linear-to-b from-[#d01010] to-[#8c0000]">0,66740 (-0,39%)</span>
        <span className="ml-[5px]">11:05:01 NZD/USD Mini</span>
        <div className="mr-[6px] ml-auto flex items-center gap-[5px]">
          <button aria-label="Clavier">
            <Svg w={21} h={14}><rect width="21" height="14" rx="1.500" fill="#fff" stroke="none" /><path d="M3 4h15M3 7h15" stroke="#5b93ee" strokeWidth="2" strokeDasharray="2 1" /><path d="M6 11h9" stroke="#5b93ee" strokeWidth="2" /></Svg>
          </button>
          <button aria-label="Réduire"><Svg w={10} h={12}><path d="M0 10.500h9" stroke="#fff" strokeWidth="2" /></Svg></button>
          <button aria-label="Restaurer"><Svg w={11} h={12}><path d="M3.500 5V2h6v5h-2M1 5.500h6v5H1z" stroke="#fff" strokeWidth="1.300" /></Svg></button>
          <button aria-label="Fermer"><Svg w={11} h={12}><path d="M1.500 2l8 8m0-8l-8 8" stroke="#fff" strokeWidth="2" /></Svg></button>
        </div>
      </header>

      <div className="flex h-[22px] shrink-0 items-center border-t border-b border-t-[#dbe9f2] border-b-[#7d929e] bg-[#9bb9c6] pl-[295px]">
        <div className="flex w-[406px] items-center">
          <span className="w-[44px]">Ordres :</span><b className="mr-[3px]">0</b><CancelPage c="#e8e8e8" bg="#bdbdbd" />
          <b className="mr-[2px] ml-2">/&nbsp; 0</b><Gears />
        </div>
        <div className="flex w-[417px] items-center">
          <span className="w-[53px]">Position :</span><b className="mr-[2px]">0</b><CancelPage c="#d88a94" bg="#b5bcc6" />
          <b className="mr-px ml-2">/&nbsp; 0</b><Gears />
        </div>
        <div className="flex w-[391px] items-center"><span className="w-16">Gain latent :</span><b>0,00 €</b></div>
        <div className="flex items-center"><span className="w-[59px]">Gain Jour :</span><b>0,00 €</b></div>
      </div>

      <div className="flex h-12 shrink-0 items-center border-b border-[#7d929e] bg-linear-to-b from-[#9fbbc8] to-[#fdfdfe] pl-[7px]">
        {TOOLS.map(([name, art], i) => (
          <button key={name} aria-label={name} className={`flex h-[25px] w-[26px] items-center justify-center ${i === 0 ? "border border-[#7f939d] bg-[#92a8b3]" : ""}`}>
            <Svg>{art}</Svg>
          </button>
        ))}
        <Select label="Nombre d'unités" value="200 unités" cls="ml-[124px] w-[86px]" />
        <Select label="Unité de temps" value="1 heure" cls="ml-[166px] w-[88px]" />
        <div className="ml-[167px] flex h-7 rounded-[3px] border border-[#7d929e] bg-white">
          <button aria-label="Indicateurs" className="flex w-[34px] items-center justify-center border-r border-[#7d929e]">
            <Svg w={30} h={24}>
              <path d="M3 14C7 2 11 2 14 9s5 9 7 7 4-4 8-13" stroke="#d33" strokeWidth="1.500" />
              <path d="M2 8c6 10 9 3 12-3s6 4 9 6 3 0 6-3" stroke="#4b4" strokeWidth="1.500" />
              <path d="M4 5h3V2h3v3h3v3h-3v3H7V8H4z" fill="#fff" stroke="#788" />
              <Arrow x={12} y={13} up c="#0a0" s={0.8} /><Arrow x={22} y={5} c="#e11" s={0.8} />
              <path d="M2 22.500h27" stroke="#00d" /><path d="M2 17h4v5H2zM11 18h4v4h-4zM16 19h4v3h-4zM26 16h3v6h-3z" fill="#0b0" stroke="none" /><path d="M7 19h3v3H7zM21 19h4v3h-4z" fill="#d22" stroke="none" />
            </Svg>
          </button>
          <button aria-label="Menu indicateurs" className="flex w-[14px] items-center justify-center"><span className="border-x-[3px] border-t-4 border-x-transparent border-t-black" /></button>
        </div>

        <div className="ml-auto flex h-full items-center bg-white">
          <button aria-label="Replier" className="mr-[2px] flex h-full w-[9px] items-center justify-center rounded-l-[6px] border-l border-[#7d929e] bg-linear-to-b from-[#b4cbd5] to-[#eef3f5]">
            <span className="border-y-4 border-l-4 border-y-transparent border-l-black" />
          </button>
          <button aria-label="Réglages" className="mr-[3px] flex h-[19px] w-[19px] items-center justify-center rounded-[3px] border border-[#7d929e] bg-[#f3f3f3]"><Wrench /></button>
          <label className="-mt-1 flex flex-col items-center"><span className="h-4 leading-4">Qté</span>
            <input defaultValue="10" className="h-[22px] w-[46px] rounded-[3px] border border-[#7d929e] bg-white pr-1 text-right" /><span className="h-[6px]" /></label>
          <span className="w-[3px]" /><Sep />
          <div className="-mt-1 mx-[2px] flex flex-col items-center"><span className="h-4 leading-4">Limite</span>
            <div className="flex gap-[3px]">
              <button aria-label="Limite" className={iconBtn}><OrderIco limit /></button>
              <button aria-label="Limite libre" className={iconBtn}><OrderIco limit slash /></button>
            </div>
          </div>
          <Sep />
          <div className="-mt-1 mx-[2px] flex flex-col items-center"><span className="h-4 leading-4">Stop</span>
            <div className="flex gap-[3px]">
              <button aria-label="Stop" className={iconBtn}><OrderIco /></button>
              <button aria-label="Stop libre" className={iconBtn}><OrderIco slash /></button>
            </div>
          </div>
          <Sep />
          <div className="-mt-1 ml-[2px] flex gap-[3px]">
            <Price name="Vendre 0,66730" label="Vendre" tail="73" cls="bg-linear-to-b from-[#ee5f5f] to-[#d63c3c]" />
            <Price name="Acheter 0,66750" label="Acheter" tail="75" cls="bg-linear-to-b from-[#40c840] to-[#22aa22]" />
          </div>
          <span className="w-[2px]" /><Sep />
          <div className="ml-[4px] flex flex-col gap-px">
            {["S", "L"].map((k) => (
              <div key={k} className="flex h-[22px] items-center">
                <label className="flex items-center gap-1"><input type="checkbox" className="h-3 w-3 appearance-none border border-[#7d929e] bg-white" /><span className="w-[11px]">{k}</span></label>
                <input aria-label={`${k} pips`} defaultValue="10" className="h-[21px] w-[18px] rounded-[3px] border border-[#7d929e] bg-white text-center text-[#8a96a0]" />
                <span className="ml-[3px] w-[23px]">pips</span>
              </div>
            ))}
          </div>
        </div>
      </div>

      <main className="flex min-h-0 flex-1 border-l border-[#7d929e] bg-white">
        <div className="-ml-px flex min-w-0 flex-1 flex-col gap-[2px] border-r border-[#7d929e]">
          <PriceChart />
          <StochChart />
        </div>
        <aside className="relative w-[47px] shrink-0 overflow-hidden">
          <svg className="absolute inset-0 h-full w-full text-[11px]">
            <g stroke="#7d929e">
              {PRICES.map((p, i) => <path key={p} d={`M0 ${Math.round(12.8 + i * 41.5) + 0.5}h4`} />)}
              {[100, 90, 80, 70, 60, 50, 40, 30, 20, 10].map((v, i) => <path key={v} d={`M0 ${Math.round(819 + i * 10.35) + 0.5}h${i % 2 ? 2 : 4}`} />)}
            </g>
            {PRICES.map((p, i) => p !== "0,669" && p !== "0,667" && (
              <text key={p} x="6" y={Math.round(16.8 + i * 41.5)} className={MAJOR.includes(p) ? "text-[12px] font-bold" : ""}>{p}</text>
            ))}
            <text x="6" y="824" className="text-[12px] font-bold">100</text>
            {[80, 60, 40].map((v, i) => <text key={v} x="6" y={844 + i * 21}>{v}</text>)}
            <path d="M0 185.500h4M0 893.500h4M0 895.500h4" stroke="#00d000" strokeWidth="1.500" />
            <path d="M0 210.500h4" stroke="#00ffff" /><path d="M0 233.500h4" stroke="#00f" /><path d="M0 7.500h4M0 245.500h4" stroke="#000" />
          </svg>
          <Tag y="top-0" t="0,67312" cls="w-[43px] border-[#7d929e] bg-[#ffff10]" />
          <Tag y="top-[172px]" t="0,66879" cls="w-[43px] border-[#7d929e] bg-white text-[#00e800]" />
          <Tag y="top-[187px]" t="0,66877" cls="w-[43px] border-[#7d929e] bg-[#f4f4f4] text-[#00c0c0]" />
          <Tag y="top-[202px]" t="0,66823" cls="w-[43px] border-[#7d929e] bg-[#f4f4f4] text-[#00f0ff]" />
          <Tag y="top-[224px]" t="0,66770" cls="w-[43px] border-[#7d929e] bg-white text-[#0000f0]" />
          <Tag y="top-[237px]" t="0,66740" cls="w-[43px] border-[#7d929e] bg-linear-to-b from-[#ffd21a] to-[#f0b800]" />
          <Tag y="top-[252px]" t="54m58s" cls="w-[43px] border-[#8fe08f] bg-linear-to-b from-[#a4f0a4] to-[#80d880]" />
          <Tag y="top-[879px]" t="28,687" cls="w-[37px] border-[#7d929e] bg-white text-[#00c800]" />
          <Tag y="top-[893px]" t="26,904" cls="w-[37px] border-[#7d929e] bg-[#f4f4f4] text-[#00c800]" />
        </aside>
      </main>

      <div className="relative h-5 shrink-0 bg-white">
        <svg className="absolute inset-0 h-full w-full text-[11px]">
          <g transform="translate(-4 0)" textAnchor="middle">
            {TIMES.map(([x, t]) => (
              <g key={x}>
                <path d={`M${x + 0.5} 0v4`} stroke="#7d929e" />
                <text x={x} y="16" className={t.includes(":") ? "" : "text-[12px] font-bold"}>{t}</text>
              </g>
            ))}
          </g>
        </svg>
        <span className="absolute top-1 left-[1040px] flex h-[15px] w-[121px] items-center justify-center border border-[#7d929e] bg-[#ffff10] whitespace-nowrap">mer. 22 août 2018 19:00</span>
      </div>

      <footer className="flex h-[31px] shrink-0 items-center border-t border-[#7d929e] bg-linear-to-b from-[#aecfdb] to-[#97b5c1] pt-[2px] pl-px">
        <button className="mr-[5px] flex h-[22px] w-[67px] items-center gap-[5px] rounded-[3px] border border-[#1c78b8] bg-linear-to-b from-[#37a3e6] to-[#1f87cc] pl-[3px] text-[11px] text-white">
          <svg width="15" height="16" viewBox="0 0 15 16" fill="#fff" stroke="#fff" strokeWidth="1.500" aria-hidden="true"><path d="M12 3L3 8l9 5" fill="none" /><circle cx="12" cy="3" r="1.800" /><circle cx="3" cy="8" r="1.800" /><circle cx="12" cy="13" r="1.800" /></svg>
          Partager
        </button>
        <button aria-label="Lier" className="mr-[9px]">
          <Svg w={23} h={22}>
            <rect x="1.500" y="2" width="6" height="8" rx="3" fill="#fff" strokeWidth="1.500" /><rect x="1.500" y="12" width="6" height="8" rx="3" fill="#fff" strokeWidth="1.500" /><path d="M4.500 7v8" strokeWidth="1.500" />
            <path d="M12.500 5v12" stroke="#a22" /><path d="M10.500 8h4v6h-4z" fill="#f77" stroke="#a22" /><path d="M18.500 1v14" stroke="#080" /><path d="M16.500 3h4v9h-4z" fill="#3d3" stroke="#080" /><path d="M12 18h7l-3.500 3.500z" fill="#000" stroke="#fff" strokeWidth=".5" />
          </Svg>
        </button>
        <button aria-label="Liste" className="mr-[11px]">
          <Svg w={15} h={18}><rect x="1" y="1" width="12.500" height="15.500" fill="#fff" strokeWidth="1.500" /><path d="M3 4h5M3 7h8M5 10h6M3 13h8" strokeWidth="1.800" /><path d="M8 2l4 4V2z" fill="#e66" stroke="none" /><path d="M2 16l4-4v4z" fill="#3b3" stroke="none" /></Svg>
        </button>
        <button aria-label="Carnet" className="mr-[7px]">
          <Svg w={16} h={18}><path d="M1 2h8v3H1zM3 6h6v3H3zM1 10h8v3H1zM3 14h6v3H3z" fill="#3c4" stroke="#444" strokeWidth=".8" /><path d="M9 2h4v3H9zM9 6h6v3H9zM9 10h4v3H9zM9 14h6v3H9z" fill="#f77" stroke="#444" strokeWidth=".8" /></Svg>
        </button>
        <div className="flex h-4 min-w-0 flex-1 border-y border-[#7d929e] bg-[#9bb9c6]">
          <button aria-label="Défiler à gauche" className="-my-px flex h-4 w-[15px] items-center justify-center rounded-[3px] border border-[#7d929e] bg-linear-to-b from-[#cfe3eb] to-[#a4c1cd]"><span className="border-y-4 border-r-4 border-y-transparent border-r-black" /></button>
          <div className="ml-auto flex w-[430px] flex-col items-center justify-center gap-px border-x border-[#7d929e] bg-linear-to-b from-[#b3d2de] to-[#97b5c1]">
            <span className="h-px w-[6px] bg-[#5d7a86]" /><span className="h-px w-[6px] bg-[#5d7a86]" /><span className="h-px w-[6px] bg-[#5d7a86]" />
          </div>
          <button aria-label="Défiler à droite" className="-my-px flex h-4 w-[15px] items-center justify-center rounded-[3px] border border-[#7d929e] bg-linear-to-b from-[#cfe3eb] to-[#a4c1cd]"><span className="border-y-4 border-l-4 border-y-transparent border-l-black" /></button>
        </div>
        <div className="mr-[6px] ml-[6px] flex items-center gap-[9px]">
          <button aria-label="Configurer"><Svg w={18} h={20}><path d="M4 8v12M13 1v18" stroke="#333" /><path d="M1.500 10h5v7h-5z" fill="#f77" stroke="#a33" /><path d="M10.500 4h5v12h-5z" fill="#3d3" stroke="#080" /><path d="M2 18l6-7c0-2 1-4 3-4l0 3 3 1c0 2-2 3-4 3l-6 6z" fill="#fff" /></Svg></button>
          <button aria-label="Zoom libre"><Svg w={19} h={20}><circle cx="7.500" cy="8" r="6" fill="#ccc" stroke="#333" /><path d="M11 12l5 7" strokeWidth="3" /><path d="M17 2v10M15 4l2-2 2 2M15 10l2 2 2-2M1 17h8M3 15l-2 2 2 2M7 15l2 2-2 2" stroke="#00e" /></Svg></button>
          <button aria-label="Zoom arrière"><Svg w={19} h={20}><circle cx="7.500" cy="7.500" r="5.500" fill="#fff" stroke="#333" /><path d="M12 12l6 7" strokeWidth="3" /><path d="M4.500 7.500h6" stroke="#00e" strokeWidth="2" /></Svg></button>
          <button aria-label="Zoom avant"><Svg w={19} h={20}><circle cx="7.500" cy="7.500" r="5.500" fill="#fff" stroke="#333" /><path d="M12 12l6 7" strokeWidth="3" /><path d="M4.500 7.500h6M7.500 4.500v6" stroke="#00e" strokeWidth="2" /></Svg></button>
        </div>
      </footer>
    </div>
  );
}
